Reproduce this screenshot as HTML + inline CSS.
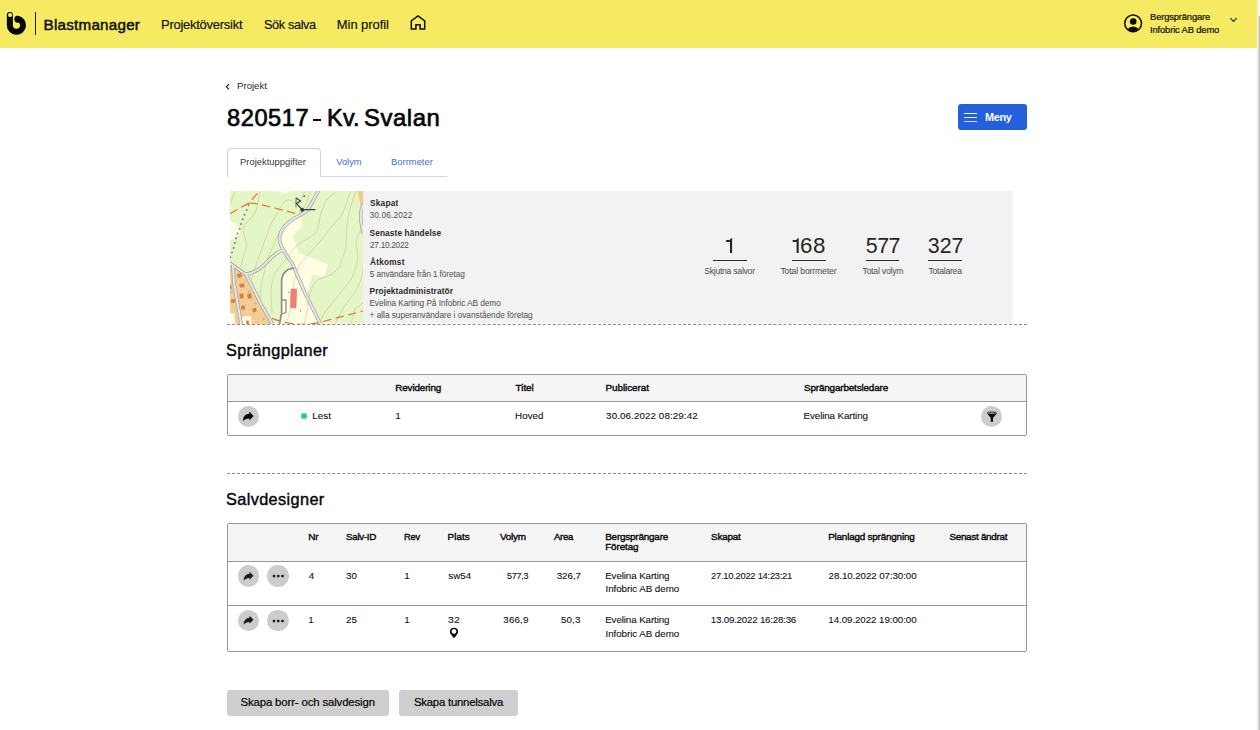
<!DOCTYPE html>
<html lang="sv">
<head>
<meta charset="utf-8">
<title>Blastmanager</title>
<style>
*{box-sizing:border-box;margin:0;padding:0}
html,body{width:1260px;height:730px;overflow:hidden;background:#fff}
body{font-family:"Liberation Sans",sans-serif;color:#1a1a1a;position:relative}
.abs{position:absolute;white-space:nowrap;line-height:1}
.t{position:absolute;white-space:pre;line-height:1}
#hdr{position:absolute;left:0;top:0;width:1257px;height:48px;background:#f5ea61}
#sb{position:absolute;left:1257px;top:0;width:3px;height:730px;background:linear-gradient(90deg,#ececec,#fafafa)}
#sb i{position:absolute;left:2px;top:16px;width:1px;height:714px;background:#bcbcbc}
#sb b{position:absolute;left:1px;top:16px;width:1px;height:714px;background:#dedede}
.circ{position:absolute;width:21px;height:21px;border-radius:50%;background:#cccccc}
.dash{position:absolute;left:227px;width:800px;height:1px;background:repeating-linear-gradient(90deg,#9a9a9a 0,#9a9a9a 3px,transparent 3px,transparent 5px)}
.tbl{position:absolute;left:227px;width:800px;border:1px solid #979797;border-radius:2px;background:#fff;overflow:hidden}
.thead{position:absolute;left:0;top:0;width:798px;background:#f5f5f5;border-bottom:1px solid #979797}
.btn{position:absolute;top:690px;height:26px;background:#cfcfcf;border-radius:3px}
</style>
</head>
<body>
<div id="hdr"></div>
<div id="sb"><b></b><i></i></div>

<!-- header icons -->
<svg class="abs" style="left:0;top:0" width="60" height="48" viewBox="0 0 60 48">
  <path d="M9.85 14.9 V25.2 A6.6 6.6 0 1 0 17.4 18.67" fill="none" stroke="#050505" stroke-width="6" stroke-linecap="round"/>
  <circle cx="17.9" cy="19.6" r="3.25" fill="#050505"/>
  <circle cx="10.05" cy="15.05" r="2.1" fill="#f5ea61"/>
  <rect x="35" y="12" width="1" height="23" fill="#1a1a1a"/>
</svg>
<svg class="abs" style="left:405px;top:10px" width="26" height="26" viewBox="405 10 26 26">
  <path d="M411.3 29 H415.9 V24.7 H420.1 V29 H424.7 V20.8 L418 15.9 L411.3 20.8 Z" fill="none" stroke="#111" stroke-width="1.5" stroke-linejoin="miter"/>
</svg>
<svg class="abs" style="left:1120px;top:10px" width="28" height="28" viewBox="1120 10 28 28">
  <defs><clipPath id="uc"><circle cx="1133.1" cy="23.35" r="8"/></clipPath></defs>
  <circle cx="1133.1" cy="23.35" r="8.4" fill="none" stroke="#0b0b0b" stroke-width="1.5"/>
  <circle cx="1133.2" cy="21.5" r="3.3" fill="#0b0b0b"/>
  <ellipse cx="1133.2" cy="31.6" rx="6.2" ry="5.2" fill="#0b0b0b" clip-path="url(#uc)"/>
</svg>
<svg class="abs" style="left:1226px;top:14px" width="14" height="12" viewBox="1226 14 14 12"><path d="M1230.3 18.2 L1233.5 21.4 L1236.7 18.2" fill="none" stroke="#222" stroke-width="1.2"/></svg>

<!-- breadcrumb chevron -->
<svg class="abs" style="left:223px;top:81px" width="10" height="12" viewBox="223 81 10 12"><path d="M229 84.2 L226.4 86.8 L229 89.4" fill="none" stroke="#222" stroke-width="1.2"/></svg>

<div class="abs" style="left:312.9px;top:118.8px;width:8.1px;height:2.2px;background:#060606"></div>
<!-- menu button -->
<div class="abs" style="left:958px;top:104px;width:69px;height:26px;background:#2460dc;border-radius:3px"></div>
<div class="abs" style="left:964px;top:113px;width:13px;height:1.2px;background:#fff;box-shadow:0 4px 0 #eef,0 8px 0 #dde"></div>

<!-- tabs -->
<div class="abs" style="left:227px;top:176px;width:220px;height:1px;background:#d9d9d9"></div>
<div class="abs" style="left:227px;top:148px;width:94px;height:29px;border:1px solid #d3d3d3;border-bottom:none;border-radius:4px 4px 0 0;background:#fff"></div>

<!-- info panel -->
<div class="abs" style="left:230px;top:191px;width:783px;height:132px;background:#f2f2f2"></div>
<svg class="abs" style="left:230px;top:191px" width="133" height="132.5" viewBox="0 0 133 132.5">
  <rect width="133" height="132.5" fill="#e4f6c6"/>
  <!-- cream fields -->
  <g fill="#fefee3">
    <path d="M0,30 L4,31.5 L9.5,36 L11,42 L0,50 Z"/>
    <path d="M48,0 H60 L57,2.2 L52,2 Z"/>
    <path d="M49.6,45 C50.5,38 57,32 64,27.5 L70.5,25.5 L73,34.5 L62.5,44.5 L69,62 L98,73.5 L94,86 L82.5,84 L77,101 L75,102 L62,72 L58,66.5 L53,58.5 C51,55 49,51 49.6,45 Z"/>
    <path d="M64.5,77.3 L62,77.3 C57,78 52,82 51.6,90 L51.6,122 L49.6,133 L90.5,133 L75,102 Z"/>
  </g>
  <!-- residential -->
  <path d="M0,72.5 L4,75.5 L16,83.8 L24,99 L32,115 L42.5,133 L0,133 Z" fill="#f3cd95"/>
  <path d="M0,122 L4,122.5 L5.5,133 L0,133 Z M12,125.5 L21,125 L21.5,133 L12.5,133 Z" fill="#fefee3"/>
  <path d="M127.5,0 H133 V14.5 L131,17 L129,7 Z" fill="#f3c98e"/>
  <!-- contours -->
  <g fill="none" stroke="#c99a78" stroke-width="0.45" opacity="0.85">
    <path d="M5,0 L0,13"/>
    <path d="M30,0 L28,11 C27,17 26,21 22,26 L16,32 C13,36 13,38 13.5,42 L16.5,52 C17,58 14,62 12,71 L11,76"/>
    <path d="M74.5,0 L73,4 C71,9 70,13 67,13 C63,11 60,8.5 58,9 C55,10 53,12 52,13.5 L41,33 L27,71 L25,78 L21,90"/>
    <path d="M80.5,0 L75,15 L69.5,22"/>
    <path d="M49,42 L45,51 L37.5,67 L34,82 L31,95 L30,109"/>
    <path d="M107,0 C100,5 96,9 95,11 L90,25 L88.5,36 C86,42 84,44 82,45 L70,52 C64,57 58,64 56,68 L45,82 C42,90 41,96 41,102 L42,122"/>
    <path d="M121,0 L112,24 L102,35 L92,48 L79,63 C72,70 69,75 68,77 L63.5,92 V98"/>
    <path d="M126,0 L119,21 L116.5,38 L116,55 C115,62 113,66 112,68 L110,75 C107,80 103,83 100,84 L89,88 C85,91 83,94 82,97 L78.5,107 L77,122 L74,133"/>
    <path d="M132,36 L126,50 C126,58 128,62 128,66 L126,77 L122,87 L109,104 L95,121 L90,130"/>
    <path d="M133,77 L132,86 L126,100 L114,116 L105,133"/>
    <path d="M133,112 L125,118 L121,133"/>
    <path d="M61,118 L57,130"/>
  </g>
  <!-- orange dashed paths -->
  <g fill="none" stroke="#e2782e" stroke-width="1.25" stroke-dasharray="8.5 4.5">
    <path d="M0,22.7 L19,12 L29.5,0"/>
    <path d="M19,12 L28,12.8 L68,23"/>
    <path d="M42,127.4 Q68,137 90,131.3 L133,120"/>
  </g>
  <!-- dotted gray -->
  <g fill="#7a7a7a">
    <circle cx="18.5" cy="14" r=".95"/><circle cx="16.7" cy="19" r=".95"/><circle cx="14.5" cy="23.8" r=".95"/><circle cx="12.7" cy="28.3" r=".95"/><circle cx="11" cy="33" r=".95"/><circle cx="9.7" cy="37.8" r=".95"/><circle cx="7.5" cy="42.5" r=".95"/><circle cx="6" cy="47.3" r=".95"/><circle cx="4.8" cy="52" r=".95"/><circle cx="3.7" cy="57" r=".95"/><circle cx="2" cy="61.5" r=".95"/><circle cx="0.3" cy="66.2" r=".95"/>
  </g>
  <!-- roads: casing then fill -->
  <g fill="none" stroke-linecap="butt" stroke-linejoin="round">
    <g stroke="#a0a0a0" stroke-width="3.5">
      <path d="M134,13 C130,19 130,27 132,36 L133.5,43"/>
      <path d="M3,75 L4,92 L8,115 L11.2,133"/>
      <path d="M-1,71.5 L4,75 L16,83.5 L24,99 L32,115 L42.5,133"/>
      <path d="M53,59 C48,61 44,64 41,67 L33,75 C30,78 25,81 16,83.5"/>
      <path d="M88.8,-1 L83.5,9 L78,18.5 C75,22 70,24 64,27.5 C57,32 51,38 49.7,45 C49,51 51,55 53,58.5 L58,66.5 L62,72 L75,102 L90.5,133"/>
    </g>
    <g stroke="#e6e6e6" stroke-width="2.1">
      <path d="M134,13 C130,19 130,27 132,36 L133.5,43"/>
      <path d="M3,75 L4,92 L8,115 L11.2,133"/>
      <path d="M-1,71.5 L4,75 L16,83.5 L24,99 L32,115 L42.5,133"/>
      <path d="M53,59 C48,61 44,64 41,67 L33,75 C30,78 25,81 16,83.5"/>
      <path d="M88.8,-1 L83.5,9 L78,18.5 C75,22 70,24 64,27.5 C57,32 51,38 49.7,45 C49,51 51,55 53,58.5 L58,66.5 L62,72 L75,102 L90.5,133"/>
    </g>
    <path d="M64.3,77.3 L62,77.3 C57,78 52,82 51.6,90 L51.6,122 L49.6,133" stroke="#8e8e8e" stroke-width="1.7"/>
    <path d="M51.6,109 H56 V121.6 L51.6,123" stroke="#8e8e8e" stroke-width="1.3"/>
  </g>
  <!-- houses -->
  <g fill="#d7813d">
    <rect x="7.3" y="82.5" width="4.4" height="4" transform="rotate(-12 9.5 84.5)"/>
    <rect x="9.6" y="92.6" width="4.8" height="3.8" transform="rotate(-4 12 94.5)"/>
    <rect x="9.6" y="102.6" width="4" height="5" transform="rotate(-6 11.5 105)"/>
    <rect x="17.4" y="102.6" width="4.2" height="5" transform="rotate(-8 19.5 105)"/>
    <rect x="1" y="108.2" width="4" height="3.6" transform="rotate(-6 3 110)"/>
    <rect x="11.2" y="114.6" width="3.8" height="4" transform="rotate(-6 13 116.5)"/>
    <rect x="22.6" y="117.2" width="3.8" height="3.8" transform="rotate(-14 24.5 119)"/>
    <rect x="16.2" y="129.6" width="2.6" height="3.4"/>
    <rect x="-1" y="94.2" width="2.6" height="3.8"/>
  </g>
  <g fill="#cbb78c">
    <rect x="0.5" y="99.4" width="2" height="2.4"/><rect x="18" y="99.4" width="2.4" height="2"/><rect x="24" y="111.6" width="2.4" height="1.8" transform="rotate(-25 25 112.5)"/><rect x="32.4" y="127" width="2.2" height="2.2"/><rect x="6.2" y="118" width="1.6" height="2.2"/><rect x="14" y="90" width="1.4" height="1.8"/>
  </g>
  <path d="M61,98 L66.8,98 L66,117 L60.3,116.6 Z" fill="#f07c7c" stroke="#d96060" stroke-width="0.4"/>
  <rect x="57.8" y="101" width="2" height="1" fill="#b9a383"/><rect x="70" y="118.6" width=".8" height="2" fill="#8d7d5d" transform="rotate(15 70.4 119.6)"/>
  <!-- R symbol -->
  <path d="M66,6.5 V16.5" stroke="#8a8a8a" stroke-width="1.3" fill="none"/>
  <path d="M66,7 L70.5,10 L66.5,12.3 L72,18.6 H85.5" stroke="#3c3c3c" stroke-width="1.15" fill="none"/>
  <circle cx="72.2" cy="18.7" r="1.95" fill="#3c3c3c"/><circle cx="74.2" cy="5.2" r=".85" fill="#444"/>
</svg>

<svg class="abs" style="left:700px;top:230px" width="120" height="30" viewBox="700 230 120 30"><path fill="#262626" d="M726.1 240 H729.5 L731.5 237.9 H732.1 V253 H730.0 V241.9 H726.1 Z M792.7 240 H796.1 L798.1 237.9 H798.7 V253 H796.6 V241.9 H792.7 Z"/></svg>
<div class="abs" style="left:713px;top:260px;width:34px;height:1px;background:#2a2a2a"></div>
<div class="abs" style="left:792px;top:260px;width:34px;height:1px;background:#2a2a2a"></div>
<div class="abs" style="left:866px;top:260px;width:33px;height:1px;background:#2a2a2a"></div>
<div class="abs" style="left:928px;top:260px;width:34px;height:1px;background:#2a2a2a"></div>

<svg class="abs" style="left:227px;top:324px" width="800" height="1"><line x1="0" y1=".5" x2="800" y2=".5" stroke="#8a8a8a" stroke-width="1" stroke-dasharray="3 2.0126"/></svg>

<!-- Sprängplaner table -->
<div class="tbl" style="top:374px;height:62px"><div class="thead" style="height:27px"></div></div>
<div class="circ" style="left:238px;top:406px"></div>
<svg class="abs" style="left:238px;top:406px" width="21" height="21" viewBox="-10.55 -10.45 21 21"><path fill="#0a0a0a" d="M.75-4.95 L5.05-.45 L.75 3.95 V1.95 C-1.95 1.85-3.95 2.75-5.55 4.85 C-5.65.15-3.25-2.55.75-2.75 Z"/></svg>
<div class="abs" style="left:300.8px;top:412.8px;width:6.4px;height:6.4px;border-radius:50%;background:#27d858"></div>
<div class="circ" style="left:981px;top:406px"></div>
<svg class="abs" style="left:985px;top:409px" width="14" height="15" viewBox="985 409 14 15">
  <path d="M987.2 413.4 L990.7 418 V421.7 H993 V418 L996.7 413.4 Z" fill="#111"/>
  <ellipse cx="991.9" cy="413.05" rx="4.6" ry="1.0" fill="#dcdcdc" stroke="#111" stroke-width="0.9"/>
</svg>

<svg class="abs" style="left:227px;top:473px" width="800" height="1"><line x1="0" y1=".5" x2="800" y2=".5" stroke="#8a8a8a" stroke-width="1" stroke-dasharray="3 2.0126"/></svg>

<!-- Salvdesigner table -->
<div class="tbl" style="top:523px;height:129px">
  <div class="thead" style="height:38px"></div>
  <div style="position:absolute;left:0;top:81px;width:798px;height:1px;background:#979797"></div>
</div>
<div class="circ" style="left:237.7px;top:565.1px;width:21.6px;height:21.8px"></div>
<div class="circ" style="left:267.1px;top:565.1px;width:21.8px;height:21.8px"></div>
<svg class="abs" style="left:238px;top:565.50px" width="21" height="21" viewBox="-10.5 -10.5 21 21"><path fill="#1c1c1c" transform="translate(.35 -.3) scale(.92)" d="M.75-4.95 L5.05-.45 L.75 3.95 V1.95 C-1.95 1.85-3.95 2.75-5.55 4.85 C-5.65.15-3.25-2.55.75-2.75 Z"/></svg>
<svg class="abs" style="left:270px;top:573.0px" width="16" height="6" viewBox="0 0 16 6"><circle cx="4" cy="3.1" r="1.4" fill="#1c1c1c"/><circle cx="8.25" cy="3.1" r="1.4" fill="#1c1c1c"/><circle cx="12.5" cy="3.1" r="1.4" fill="#1c1c1c"/></svg>
<div class="circ" style="left:237.7px;top:609.6px;width:21.6px;height:21.8px"></div>
<div class="circ" style="left:267.1px;top:609.6px;width:21.8px;height:21.8px"></div>
<svg class="abs" style="left:238px;top:610.00px" width="21" height="21" viewBox="-10.5 -10.5 21 21"><path fill="#1c1c1c" transform="translate(.35 -.3) scale(.92)" d="M.75-4.95 L5.05-.45 L.75 3.95 V1.95 C-1.95 1.85-3.95 2.75-5.55 4.85 C-5.65.15-3.25-2.55.75-2.75 Z"/></svg>
<svg class="abs" style="left:270px;top:617.5px" width="16" height="6" viewBox="0 0 16 6"><circle cx="4" cy="3.1" r="1.4" fill="#1c1c1c"/><circle cx="8.25" cy="3.1" r="1.4" fill="#1c1c1c"/><circle cx="12.5" cy="3.1" r="1.4" fill="#1c1c1c"/></svg>

<svg class="abs" style="left:448px;top:626px" width="12" height="14" viewBox="448 626 12 14">
  <path d="M454 627.75 a4.1 4.1 0 0 1 4.1 4.1 c0 1.7 -1.2 3 -4.1 6.3 c-2.9 -3.3 -4.1 -4.6 -4.1 -6.3 a4.1 4.1 0 0 1 4.1 -4.1 Z M454 629.0 a2.4 2.4 0 1 0 0.001 0 Z" fill="#0a0a0a" fill-rule="evenodd"/>
</svg>

<!-- buttons -->
<div class="btn" style="left:227px;width:162px"></div>
<div class="btn" style="left:399px;width:119px"></div>

<div class="t" style="left:43.60px;top:16.50px;font-size:15.2px;color:#0d0d0d;letter-spacing:0.234px;-webkit-text-stroke:0.45px #0d0d0d">Blastmanager</div>
<div class="t" style="left:161.00px;top:18.00px;font-size:13px;color:#0d0d0d;letter-spacing:-0.267px;-webkit-text-stroke:0.15px #0d0d0d">Projektöversikt</div>
<div class="t" style="left:263.50px;top:18.00px;font-size:13px;color:#0d0d0d;letter-spacing:-0.390px;transform:scaleX(0.9790);transform-origin:0.50px 0;-webkit-text-stroke:0.15px #0d0d0d">Sök salva</div>
<div class="t" style="left:336.80px;top:18.00px;font-size:13px;color:#0d0d0d;letter-spacing:-0.061px;-webkit-text-stroke:0.15px #0d0d0d">Min profil</div>
<div class="t" style="left:1150.10px;top:11.80px;font-size:9.4px;color:#0d0d0d;letter-spacing:-0.163px;-webkit-text-stroke:0.2px #0d0d0d">Bergsprängare</div>
<div class="t" style="left:1150.00px;top:24.70px;font-size:9.4px;color:#0d0d0d;letter-spacing:-0.138px;-webkit-text-stroke:0.2px #0d0d0d">Infobric AB demo</div>
<div class="t" style="left:237.10px;top:80.80px;font-size:9.6px;color:#2a2a2a;letter-spacing:-0.018px">Projekt</div>
<div class="t" style="left:226.50px;top:106.50px;font-size:23.4px;color:#060606;letter-spacing:0.562px;transform:scaleX(1.0092);transform-origin:1.00px 0;-webkit-text-stroke:0.68px #060606">820517</div>
<div class="t" style="left:327.10px;top:106.50px;font-size:23.4px;color:#060606;letter-spacing:0.215px;-webkit-text-stroke:0.68px #060606">Kv.</div>
<div class="t" style="left:363.50px;top:106.50px;font-size:23.4px;color:#060606;letter-spacing:0.562px;transform:scaleX(1.0189);transform-origin:1.00px 0;-webkit-text-stroke:0.68px #060606">Svalan</div>
<div class="t" style="left:985.10px;top:111.00px;font-size:11.6px;color:#fff;font-weight:bold;letter-spacing:-0.348px;transform:scaleX(0.9406);transform-origin:0.70px 0">Meny</div>
<div class="t" style="left:240.10px;top:156.80px;font-size:9.4px;color:#3a3a3a;letter-spacing:0.013px">Projektuppgifter</div>
<div class="t" style="left:336.20px;top:156.80px;font-size:9.4px;color:#3f6fc4;letter-spacing:-0.017px">Volym</div>
<div class="t" style="left:391.10px;top:156.80px;font-size:9.4px;color:#3f6fc4;letter-spacing:0.006px">Borrmeter</div>
<div class="t" style="left:369.60px;top:199.00px;font-size:8.3px;color:#2a2a2a;font-weight:bold;letter-spacing:0.199px;transform:scaleX(1.0018);transform-origin:0.20px 0">Skapat</div>
<div class="t" style="left:369.50px;top:210.80px;font-size:8.3px;color:#505050;letter-spacing:0.153px">30.06.2022</div>
<div class="t" style="left:369.60px;top:229.00px;font-size:8.3px;color:#2a2a2a;font-weight:bold;letter-spacing:0.100px">Senaste händelse</div>
<div class="t" style="left:369.60px;top:240.80px;font-size:8.3px;color:#505050;letter-spacing:-0.249px;transform:scaleX(0.9874);transform-origin:0.40px 0">27.10.2022</div>
<div class="t" style="left:369.60px;top:258.00px;font-size:8.3px;color:#2a2a2a;font-weight:bold;letter-spacing:0.199px;transform:scaleX(1.0019);transform-origin:0.20px 0">Åtkomst</div>
<div class="t" style="left:369.70px;top:270.00px;font-size:8.3px;color:#505050;letter-spacing:-0.108px">5 användare från 1 företag</div>
<div class="t" style="left:369.50px;top:287.00px;font-size:8.3px;color:#2a2a2a;font-weight:bold;letter-spacing:0.124px">Projektadministratör</div>
<div class="t" style="left:369.40px;top:299.00px;font-size:8.3px;color:#505050;letter-spacing:-0.069px">Evelina Karting På Infobric AB demo</div>
<div class="t" style="left:369.60px;top:311.00px;font-size:8.3px;color:#505050;letter-spacing:-0.031px">+ alla superanvändare i ovanstående företag</div>
<div class="t" style="left:800.10px;top:236.00px;font-size:21.4px;color:#262626;letter-spacing:0.514px;transform:scaleX(1.0439);transform-origin:1.00px 0">68</div>
<div class="t" style="left:865.70px;top:236.00px;font-size:21.4px;color:#262626;letter-spacing:-0.452px">577</div>
<div class="t" style="left:927.70px;top:236.00px;font-size:21.4px;color:#262626;letter-spacing:0.048px">327</div>
<div class="t" style="left:704.20px;top:267.00px;font-size:8.6px;color:#4a4a4a;letter-spacing:-0.242px">Skjutna salvor</div>
<div class="t" style="left:780.40px;top:267.00px;font-size:8.6px;color:#4a4a4a;letter-spacing:-0.119px">Total borrmeter</div>
<div class="t" style="left:862.40px;top:267.00px;font-size:8.6px;color:#4a4a4a;letter-spacing:-0.185px">Total volym</div>
<div class="t" style="left:928.40px;top:267.00px;font-size:8.6px;color:#4a4a4a;letter-spacing:-0.224px">Totalarea</div>
<div class="t" style="left:226.10px;top:342.60px;font-size:15.9px;color:#080808;letter-spacing:0.382px;transform:scaleX(1.0215);transform-origin:0.70px 0;-webkit-text-stroke:0.42px #080808">Sprängplaner</div>
<div class="t" style="left:225.90px;top:492.10px;font-size:15.9px;color:#080808;letter-spacing:0.382px;transform:scaleX(1.0228);transform-origin:0.70px 0;-webkit-text-stroke:0.42px #080808">Salvdesigner</div>
<div class="t" style="left:395.20px;top:382.70px;font-size:9.9px;color:#0a0a0a;letter-spacing:-0.124px;-webkit-text-stroke:0.4px #0a0a0a">Revidering</div>
<div class="t" style="left:515.60px;top:382.70px;font-size:9.9px;color:#0a0a0a;letter-spacing:-0.034px;-webkit-text-stroke:0.4px #0a0a0a">Titel</div>
<div class="t" style="left:605.60px;top:382.70px;font-size:9.9px;color:#0a0a0a;letter-spacing:-0.064px;-webkit-text-stroke:0.4px #0a0a0a">Publicerat</div>
<div class="t" style="left:804.00px;top:382.70px;font-size:9.9px;color:#0a0a0a;letter-spacing:-0.150px;-webkit-text-stroke:0.4px #0a0a0a">Sprängarbetsledare</div>
<div class="t" style="left:312.20px;top:411.00px;font-size:9.8px;color:#111;letter-spacing:0.100px;-webkit-text-stroke:0.1px #111">Lest</div>
<div class="t" style="left:395.30px;top:411.00px;font-size:9.8px;color:#111;-webkit-text-stroke:0.1px #111">1</div>
<div class="t" style="left:515.00px;top:411.00px;font-size:9.8px;color:#111;letter-spacing:0.056px;-webkit-text-stroke:0.1px #111">Hoved</div>
<div class="t" style="left:606.10px;top:411.00px;font-size:9.8px;color:#111;letter-spacing:0.091px;-webkit-text-stroke:0.1px #111">30.06.2022 08:29:42</div>
<div class="t" style="left:803.60px;top:411.00px;font-size:9.8px;color:#111;letter-spacing:-0.112px;-webkit-text-stroke:0.1px #111">Evelina Karting</div>
<div class="t" style="left:308.20px;top:531.70px;font-size:9.9px;color:#0a0a0a;letter-spacing:0.051px;-webkit-text-stroke:0.4px #0a0a0a">Nr</div>
<div class="t" style="left:346.00px;top:531.70px;font-size:9.9px;color:#0a0a0a;letter-spacing:-0.297px;transform:scaleX(0.9925);transform-origin:0.40px 0;-webkit-text-stroke:0.4px #0a0a0a">Salv-ID</div>
<div class="t" style="left:404.20px;top:531.70px;font-size:9.9px;color:#0a0a0a;letter-spacing:-0.297px;transform:scaleX(0.9470);transform-origin:0.80px 0;-webkit-text-stroke:0.4px #0a0a0a">Rev</div>
<div class="t" style="left:447.60px;top:531.70px;font-size:9.9px;color:#0a0a0a;letter-spacing:0.035px;-webkit-text-stroke:0.4px #0a0a0a">Plats</div>
<div class="t" style="left:500.00px;top:531.70px;font-size:9.9px;color:#0a0a0a;letter-spacing:-0.228px;-webkit-text-stroke:0.4px #0a0a0a">Volym</div>
<div class="t" style="left:554.00px;top:531.70px;font-size:9.9px;color:#0a0a0a;letter-spacing:-0.297px;transform:scaleX(0.9645);transform-origin:0.00px 0;-webkit-text-stroke:0.4px #0a0a0a">Area</div>
<div class="t" style="left:605.20px;top:531.70px;font-size:9.9px;color:#0a0a0a;letter-spacing:-0.190px;-webkit-text-stroke:0.4px #0a0a0a">Bergsprängare</div>
<div class="t" style="left:605.20px;top:541.70px;font-size:9.9px;color:#0a0a0a;letter-spacing:-0.119px;-webkit-text-stroke:0.4px #0a0a0a">Företag</div>
<div class="t" style="left:711.10px;top:531.70px;font-size:9.9px;color:#0a0a0a;letter-spacing:-0.214px;-webkit-text-stroke:0.4px #0a0a0a">Skapat</div>
<div class="t" style="left:828.20px;top:531.70px;font-size:9.9px;color:#0a0a0a;letter-spacing:-0.198px;-webkit-text-stroke:0.4px #0a0a0a">Planlagd sprängning</div>
<div class="t" style="left:949.40px;top:531.70px;font-size:9.9px;color:#0a0a0a;letter-spacing:-0.283px;-webkit-text-stroke:0.4px #0a0a0a">Senast ändrat</div>
<div class="t" style="left:308.80px;top:571.20px;font-size:9.8px;color:#111;-webkit-text-stroke:0.1px #111">4</div>
<div class="t" style="left:346.10px;top:571.20px;font-size:9.8px;color:#111;-webkit-text-stroke:0.1px #111">30</div>
<div class="t" style="left:404.30px;top:571.20px;font-size:9.8px;color:#111;-webkit-text-stroke:0.1px #111">1</div>
<div class="t" style="left:448.20px;top:571.20px;font-size:9.8px;color:#111;letter-spacing:0.057px;-webkit-text-stroke:0.1px #111">sw54</div>
<div class="t" style="left:506.70px;top:571.20px;font-size:9.8px;color:#111;letter-spacing:-0.294px;transform:scaleX(0.9252);transform-origin:0.30px 0;-webkit-text-stroke:0.1px #111">577,3</div>
<div class="t" style="left:556.70px;top:571.20px;font-size:9.8px;color:#111;letter-spacing:-0.043px;-webkit-text-stroke:0.1px #111">326,7</div>
<div class="t" style="left:605.20px;top:571.20px;font-size:9.8px;color:#111;letter-spacing:-0.112px;-webkit-text-stroke:0.1px #111">Evelina Karting</div>
<div class="t" style="left:605.50px;top:584.00px;font-size:9.8px;color:#111;letter-spacing:-0.061px;-webkit-text-stroke:0.1px #111">Infobric AB demo</div>
<div class="t" style="left:711.10px;top:571.20px;font-size:9.8px;color:#111;letter-spacing:-0.294px;transform:scaleX(0.9609);transform-origin:0.40px 0;-webkit-text-stroke:0.1px #111">27.10.2022 14:23:21</div>
<div class="t" style="left:828.60px;top:571.20px;font-size:9.8px;color:#111;letter-spacing:-0.104px;-webkit-text-stroke:0.1px #111">28.10.2022 07:30:00</div>
<div class="t" style="left:308.30px;top:614.80px;font-size:9.8px;color:#111;-webkit-text-stroke:0.1px #111">1</div>
<div class="t" style="left:346.00px;top:614.80px;font-size:9.8px;color:#111;-webkit-text-stroke:0.1px #111">25</div>
<div class="t" style="left:404.30px;top:614.80px;font-size:9.8px;color:#111;-webkit-text-stroke:0.1px #111">1</div>
<div class="t" style="left:448.10px;top:614.80px;font-size:9.8px;color:#111;letter-spacing:0.235px;transform:scaleX(1.0592);transform-origin:0.30px 0;-webkit-text-stroke:0.1px #111">32</div>
<div class="t" style="left:503.30px;top:614.80px;font-size:9.8px;color:#111;letter-spacing:0.157px;-webkit-text-stroke:0.1px #111">366,9</div>
<div class="t" style="left:561.10px;top:614.80px;font-size:9.8px;color:#111;letter-spacing:0.059px;-webkit-text-stroke:0.1px #111">50,3</div>
<div class="t" style="left:605.20px;top:614.80px;font-size:9.8px;color:#111;letter-spacing:-0.112px;-webkit-text-stroke:0.1px #111">Evelina Karting</div>
<div class="t" style="left:605.50px;top:629.00px;font-size:9.8px;color:#111;letter-spacing:-0.061px;-webkit-text-stroke:0.1px #111">Infobric AB demo</div>
<div class="t" style="left:710.80px;top:614.80px;font-size:9.8px;color:#111;letter-spacing:-0.243px;-webkit-text-stroke:0.1px #111">13.09.2022 16:28:36</div>
<div class="t" style="left:828.30px;top:614.80px;font-size:9.8px;color:#111;letter-spacing:-0.087px;-webkit-text-stroke:0.1px #111">14.09.2022 19:00:00</div>
<div class="t" style="left:240.50px;top:697.00px;font-size:11.4px;color:#000;letter-spacing:-0.140px;-webkit-text-stroke:0.18px #000">Skapa borr- och salvdesign</div>
<div class="t" style="left:413.90px;top:697.00px;font-size:11.4px;color:#000;letter-spacing:-0.233px;-webkit-text-stroke:0.18px #000">Skapa tunnelsalva</div>
</body>
</html>
